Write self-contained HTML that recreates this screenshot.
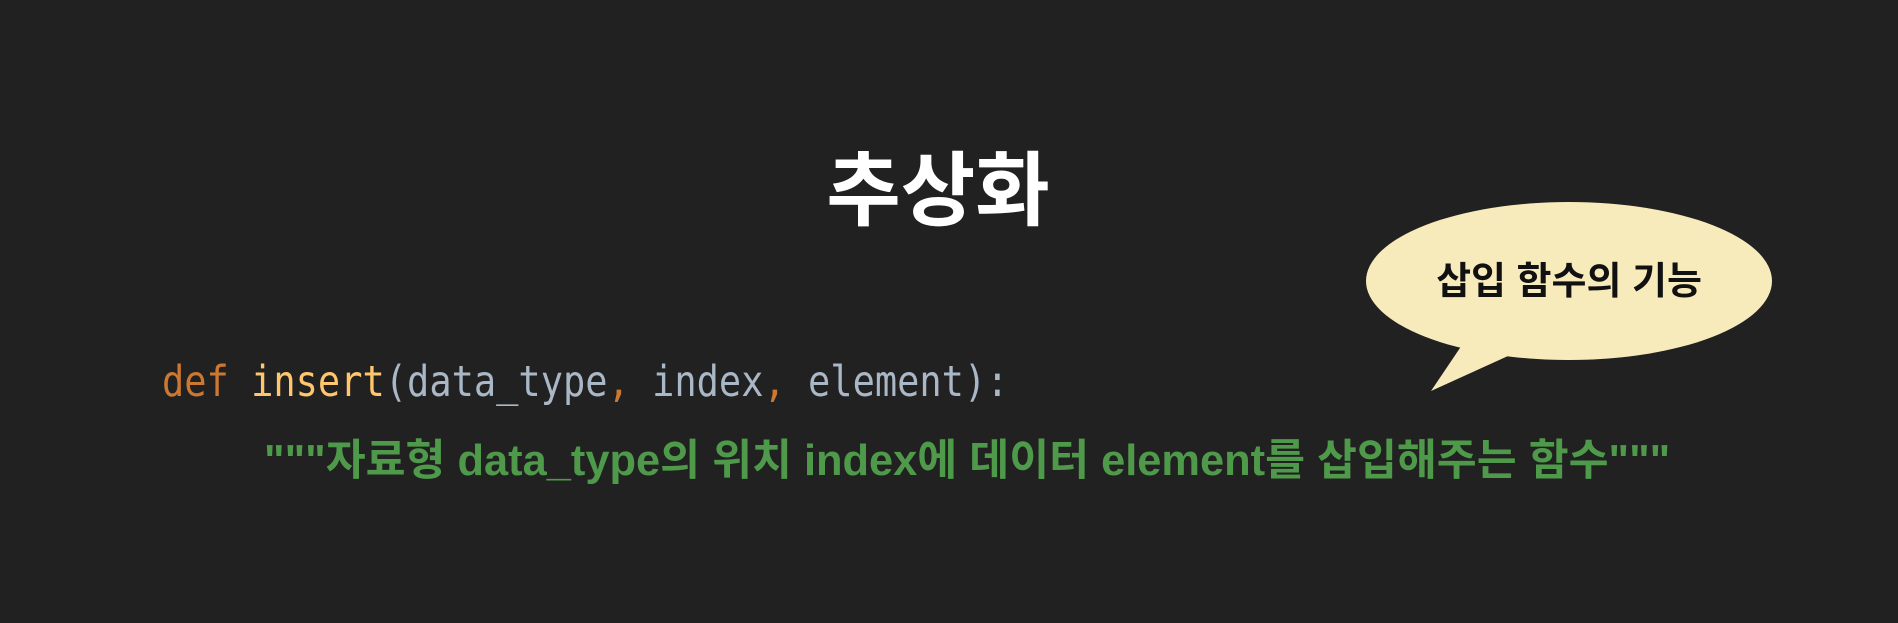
<!DOCTYPE html>
<html><head><meta charset="utf-8"><style>
html,body{margin:0;padding:0;width:1898px;height:623px;background:#212121;overflow:hidden;position:relative}
.t{position:absolute;white-space:nowrap}
#title{left:0;width:1898px;text-align:center;top:126px;font:bold 81px "Liberation Sans","Noto Sans CJK KR",sans-serif;color:#fff;margin-left:-11px}
#code{left:162px;top:357px;font:37px "DejaVu Sans Mono","Liberation Mono",monospace;color:#a9b7c6;transform:scaleY(1.15);transform-origin:left top}
.k{color:#cc7832}.f{color:#ffc66d}
#doc{left:264px;top:426px;font:bold 43.4px "Liberation Sans","Noto Sans CJK KR",sans-serif;color:#4e9a4a;transform-origin:left top}
#bt{left:1369px;top:250px;width:400px;text-align:center;font:bold 38px "Liberation Sans","Noto Sans CJK KR",sans-serif;color:#111}
</style></head><body>
<svg width="1898" height="623" style="position:absolute;left:0;top:0">
<ellipse cx="1569" cy="281" rx="203" ry="79" fill="#f8ebbb"/>
<polygon points="1462,345 1431,391 1508,356" fill="#f8ebbb"/>
</svg>
<div class="t" id="title">추상화</div>
<div class="t" id="bt">삽입 함수의 기능</div>
<div class="t" id="code"><span class="k">def</span> <span class="f">insert</span>(data_type<span class="k">,</span> index<span class="k">,</span> element):</div>
<div class="t" id="doc">"""자료형 data_type의 위치 index에 데이터 element를 삽입해주는 함수"""</div>
</body></html>
